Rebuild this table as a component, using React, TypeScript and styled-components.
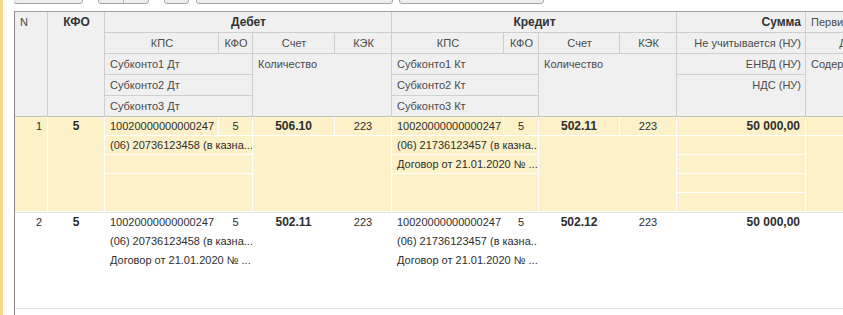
import React from 'react';
import styled, { createGlobalStyle } from 'styled-components';

// widths of the 12 grid tracks, the 1px gap between them draws the cell lines
const COLUMNS = '32px 56px 113px 33px 81px 56px 111px 34px 80px 56px 128px 90px';

type Align = 'left' | 'center' | 'right';

interface Entry {
  n: number;
  kfo: string;
  debit: { kps: string; kfo: string; account: string; kek: string; sub: string[] };
  credit: { kps: string; kfo: string; account: string; kek: string; sub: string[] };
  sum: string;
  selected?: boolean;
}

const entries: Entry[] = [
  {
    n: 1,
    kfo: '5',
    debit: { kps: '10020000000000247', kfo: '5', account: '506.10', kek: '223', sub: ['(06) 20736123458 (в казна...', '', ''] },
    credit: {
      kps: '10020000000000247',
      kfo: '5',
      account: '502.11',
      kek: '223',
      sub: ['(06) 21736123457 (в казна...', 'Договор от 21.01.2020 № ...', ''],
    },
    sum: '50 000,00',
    selected: true,
  },
  {
    n: 2,
    kfo: '5',
    debit: {
      kps: '10020000000000247',
      kfo: '5',
      account: '502.11',
      kek: '223',
      sub: ['(06) 20736123458 (в казна...', 'Договор от 21.01.2020 № ...', ''],
    },
    credit: {
      kps: '10020000000000247',
      kfo: '5',
      account: '502.12',
      kek: '223',
      sub: ['(06) 21736123457 (в казна...', 'Договор от 21.01.2020 № ...', ''],
    },
    sum: '50 000,00',
  },
];

const GlobalStyle = createGlobalStyle`
  html, body {
    margin: 0;
    padding: 0;
    background: #fff;
    overflow: hidden;
  }
  body {
    font-family: 'Liberation Sans', Arial, sans-serif;
    font-size: 11px;
    color: #2e2e2e;
  }
`;

const Window = styled.div`
  display: flex;
  width: 843px;
  height: 315px;
  overflow: hidden;
`;

const Stripe = styled.div`
  flex: 0 0 3px;
  background: #f2da8c;
`;

const Content = styled.div`
  flex: 1;
  min-width: 0;
  display: flex;
  flex-direction: column;
  padding-left: 11px;
`;

const Toolbar = styled.div`
  display: flex;
  align-items: flex-end;
  height: 4px;
  margin-bottom: 7px;
  overflow: hidden;
  flex: 0 0 auto;
`;

const ToolButton = styled.div<{ $width: number; $offset: number }>`
  display: flex;
  flex: 0 0 ${(p) => p.$width}px;
  height: 22px;
  margin-left: ${(p) => p.$offset}px;
  box-sizing: border-box;
  border: 1px solid #a7a7a7;
  border-radius: 3px;
  background: linear-gradient(#ffffff, #ececec);
`;

const ButtonPart = styled.div`
  flex: 1;
  & + & {
    border-left: 1px solid #b5b5b5;
  }
`;

const Table = styled.div`
  flex: 1;
  width: max-content;
  border-left: 1px solid #888;
  border-top: 1px solid #a3a3a3;
`;

const HeaderGrid = styled.div`
  display: grid;
  grid-template-columns: ${COLUMNS};
  grid-template-rows: repeat(5, 20px);
  gap: 1px;
  background: #cfcfcf;
  border-bottom: 1px solid #c4c4c4;
  color: #4a4a4a;
`;

const HeadCell = styled.div<{ $col: string; $row: string; $align?: Align; $bold?: boolean }>`
  grid-column: ${(p) => p.$col};
  grid-row: ${(p) => p.$row};
  background: #f0f0f0;
  padding: 0 4px 0 5px;
  line-height: 20px;
  text-align: ${(p) => p.$align ?? 'left'};
  font-weight: ${(p) => (p.$bold ? 700 : 400)};
  font-size: ${(p) => (p.$bold ? 12 : 11)}px;
  color: ${(p) => (p.$bold ? '#333' : '#4a4a4a')};
  white-space: nowrap;
  overflow: hidden;
`;

const RowGrid = styled.div<{ $selected?: boolean }>`
  --row-bg: ${(p) => (p.$selected ? '#fcf1c8' : '#fff')};
  display: grid;
  grid-template-columns: ${COLUMNS};
  grid-template-rows: repeat(5, 18px);
  gap: 1px;
  padding-bottom: 1px;
  background: #fff;
  border-bottom: 1px solid #e1e1e1;
`;

const Cell = styled.div<{ $col: string; $row: string; $align?: Align; $bold?: boolean }>`
  grid-column: ${(p) => p.$col};
  grid-row: ${(p) => p.$row};
  background: var(--row-bg);
  padding: 0 5px;
  line-height: 18px;
  text-align: ${(p) => p.$align ?? 'left'};
  font-weight: ${(p) => (p.$bold ? 700 : 400)};
  font-size: ${(p) => (p.$bold ? 12 : 11)}px;
  white-space: nowrap;
  overflow: hidden;
`;

const Header: React.FC = () => (
  <HeaderGrid>
    <HeadCell $col="1" $row="1 / 6">N</HeadCell>
    <HeadCell $col="2" $row="1 / 6" $align="center" $bold>
      КФО
    </HeadCell>
    <HeadCell $col="3 / 7" $row="1" $align="center" $bold>
      Дебет
    </HeadCell>
    <HeadCell $col="7 / 11" $row="1" $align="center" $bold>
      Кредит
    </HeadCell>
    <HeadCell $col="11" $row="1" $align="right" $bold>
      Сумма
    </HeadCell>
    <HeadCell $col="12" $row="1">Первичный документ</HeadCell>

    <HeadCell $col="3" $row="2" $align="center">КПС</HeadCell>
    <HeadCell $col="4" $row="2" $align="center">КФО</HeadCell>
    <HeadCell $col="5" $row="2" $align="center">Счет</HeadCell>
    <HeadCell $col="6" $row="2" $align="center">КЭК</HeadCell>
    <HeadCell $col="7" $row="2" $align="center">КПС</HeadCell>
    <HeadCell $col="8" $row="2" $align="center">КФО</HeadCell>
    <HeadCell $col="9" $row="2" $align="center">Счет</HeadCell>
    <HeadCell $col="10" $row="2" $align="center">КЭК</HeadCell>
    <HeadCell $col="11" $row="2" $align="right">Не учитывается (НУ)</HeadCell>
    <HeadCell $col="12" $row="2" $align="center">Дата</HeadCell>

    <HeadCell $col="3 / 5" $row="3">Субконто1 Дт</HeadCell>
    <HeadCell $col="5 / 7" $row="3 / 6">Количество</HeadCell>
    <HeadCell $col="7 / 9" $row="3">Субконто1 Кт</HeadCell>
    <HeadCell $col="9 / 11" $row="3 / 6">Количество</HeadCell>
    <HeadCell $col="11" $row="3" $align="right">ЕНВД (НУ)</HeadCell>
    <HeadCell $col="12" $row="3 / 6">Содержание</HeadCell>

    <HeadCell $col="3 / 5" $row="4">Субконто2 Дт</HeadCell>
    <HeadCell $col="7 / 9" $row="4">Субконто2 Кт</HeadCell>
    <HeadCell $col="11" $row="4 / 6" $align="right">НДС (НУ)</HeadCell>

    <HeadCell $col="3 / 5" $row="5">Субконто3 Дт</HeadCell>
    <HeadCell $col="7 / 9" $row="5">Субконто3 Кт</HeadCell>
  </HeaderGrid>
);

const Side: React.FC<{ side: Entry['debit']; first: number }> = ({ side, first }) => {
  const span = `${first} / ${first + 2}`;
  const qty = `${first + 2} / ${first + 4}`;
  return (
    <>
      <Cell $col={String(first)} $row="1">
        {side.kps}
      </Cell>
      <Cell $col={String(first + 1)} $row="1" $align="center">
        {side.kfo}
      </Cell>
      <Cell $col={String(first + 2)} $row="1" $align="center" $bold>
        {side.account}
      </Cell>
      <Cell $col={String(first + 3)} $row="1" $align="center">
        {side.kek}
      </Cell>
      <Cell $col={span} $row="2">
        {side.sub[0]}
      </Cell>
      <Cell $col={span} $row="3">
        {side.sub[1]}
      </Cell>
      <Cell $col={span} $row="4 / 6">
        {side.sub[2]}
      </Cell>
      <Cell $col={qty} $row="2 / 6" />
    </>
  );
};

const Row: React.FC<{ entry: Entry }> = ({ entry }) => (
  <RowGrid $selected={entry.selected}>
    <Cell $col="1" $row="1 / 6" $align="right">
      {entry.n}
    </Cell>
    <Cell $col="2" $row="1 / 6" $align="center" $bold>
      {entry.kfo}
    </Cell>
    <Side side={entry.debit} first={3} />
    <Side side={entry.credit} first={7} />
    <Cell $col="11" $row="1" $align="right" $bold>
      {entry.sum}
    </Cell>
    <Cell $col="11" $row="2" />
    <Cell $col="11" $row="3" />
    <Cell $col="11" $row="4" />
    <Cell $col="11" $row="5" />
    <Cell $col="12" $row="1" />
    <Cell $col="12" $row="2 / 6" />
  </RowGrid>
);

const App: React.FC = () => (
  <>
    <GlobalStyle />
    <Window>
      <Stripe />
      <Content>
        <Toolbar>
          <ToolButton $width={70} $offset={-1} />
          <ToolButton $width={51} $offset={15}>
            <ButtonPart />
            <ButtonPart />
          </ToolButton>
          <ToolButton $width={25} $offset={15} />
          <ToolButton $width={197} $offset={7} />
          <ToolButton $width={145} $offset={6} />
        </Toolbar>
        <Table>
          <Header />
          {entries.map((e) => (
            <Row key={e.n} entry={e} />
          ))}
        </Table>
      </Content>
    </Window>
  </>
);

export default App;
